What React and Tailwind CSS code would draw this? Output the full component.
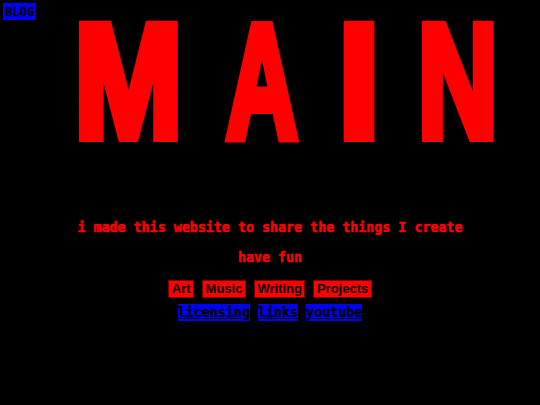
import React from 'react'

const mono = "font-['DejaVu_Sans_Mono',monospace]"

const letters = [
  { ch: 'M', w: 'w-[126px]', sx: 'scale-x-[1.0]', ml: 'ml-[65.5px]' },
  { ch: 'A', w: 'w-[112px]', sx: 'scale-x-[0.76]', ml: 'ml-[14px]' },
  { ch: 'I', w: 'w-[62px]', sx: 'scale-x-[1.15]', ml: 'ml-[11px]' },
  { ch: 'N', w: 'w-[112px]', sx: 'scale-x-[0.85]', ml: 'ml-[11px]' },
]

export default function App() {
  return (
    <div className="relative min-h-[405px] w-full bg-black overflow-hidden">
      <button
        className={`absolute left-[3px] top-[3px] h-[17px] bg-[#0000ff] px-[2px] text-[12px] leading-none font-bold text-black [-webkit-text-stroke:0.3px_#000] ${mono}`}
      >
        BLOG
      </button>

      <div className="flex h-[188px]">
        {letters.map((l) => (
          <div key={l.ch} className={`flex h-full shrink-0 items-center justify-center ${l.w} ${l.ml}`}>
            <span
              className={`inline-block whitespace-nowrap px-2 text-[130px] leading-[1.15] font-bold text-[#ff0000] font-['Liberation_Sans',Arial,sans-serif] [-webkit-text-stroke:8px_#ff0000] scale-y-[1.24] -translate-y-[12px] ${l.sx}`}
            >
              {l.ch}
            </span>
          </div>
        ))}
      </div>

      <p className={`mt-[31px] text-center text-[13.33px] leading-[18px] font-bold text-[#ff0000] [-webkit-text-stroke:0.5px_#ff0000] ${mono}`}>
        i made this website to share the things I create
      </p>
      <p className={`mt-[12px] text-center text-[13.33px] leading-[18px] font-bold text-[#ff0000] [-webkit-text-stroke:0.5px_#ff0000] ${mono}`}>
        have fun
      </p>

      <div className="mt-[13px] flex justify-center gap-[8px]">
        {['Art', 'Music', 'Writing', 'Projects'].map((t) => (
          <button
            key={t}
            className="h-[18px] border border-[#7a0000] bg-[#ff0000] px-[2.5px] text-[13px] leading-[16px] font-bold text-black font-['Liberation_Sans',Arial,sans-serif]"
          >
            {t}
          </button>
        ))}
      </div>

      <div className={`mt-[6px] text-center text-[13.33px] leading-[17px] font-bold text-black [-webkit-text-stroke:0.4px_#000] ${mono}`}>
        <a className="bg-[#0000ff] py-px underline">licensing</a>{' '}
        <a className="bg-[#0000ff] py-px underline">links</a>{' '}
        <a className="bg-[#0000ff] py-px underline">youtube</a>
      </div>
    </div>
  )
}
